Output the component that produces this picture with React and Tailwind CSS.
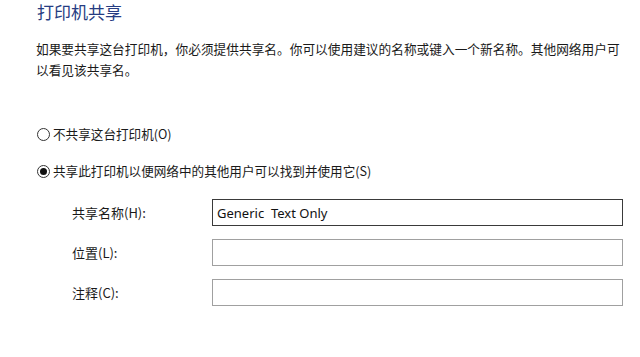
const cjk = { fontFamily: '"Noto Sans CJK SC", "Noto Sans", sans-serif' }

function Radio({ checked, label }) {
  return (
    <label className="flex items-center h-[20px] gap-[3px] text-[12.6px] text-[#1a1a1a]">
      <span className="relative w-[13px] h-[13px] rounded-full border border-[#333] bg-white flex items-center justify-center shrink-0">
        {checked && <span className="w-[7px] h-[7px] rounded-full bg-[#111]" />}
      </span>
      <span className="leading-[20px]">{label}</span>
    </label>
  )
}

function Field({ label, value, focused }) {
  return (
    <div className="flex items-center h-[27px]">
      <div className="w-[140px] pl-[72px] box-content text-[13px] text-[#1a1a1a] leading-[20px]">
        {label}
      </div>
      <input
        readOnly
        defaultValue={value}
        className={`w-[411px] h-[27px] px-[4px] text-[13px] text-[#111] bg-white outline-none border ${
          focused ? 'border-[#3a3a3a]' : 'border-[#a0a0a0]'
        }`}
        style={{ fontFamily: '"Noto Sans", "Open Sans", sans-serif' }}
      />
    </div>
  )
}

export default function App() {
  return (
    <div className="w-[640px] h-[357px] bg-white overflow-hidden" style={cjk}>
      <div className="pl-[37px] h-[24px] text-[17px] leading-[24px] text-[#263c82]">打印机共享</div>

      <p className="mt-[14px] pl-[36px] w-[626px] text-[12.7px] leading-[21px] text-[#1a1a1a]">
        如果要共享这台打印机，你必须提供共享名。你可以使用建议的名称或键入一个新名称。其他网络用户可以看见该共享名。
      </p>

      <div className="mt-[44px] pl-[37px] flex flex-col gap-[17px]">
        <Radio label="不共享这台打印机(O)" />
        <Radio checked label="共享此打印机以便网络中的其他用户可以找到并使用它(S)" />
      </div>

      <div className="mt-[18px] flex flex-col gap-[13px]">
        <Field label="共享名称(H):" value="Generic  Text Only" focused />
        <Field label="位置(L):" value="" />
        <Field label="注释(C):" value="" />
      </div>
    </div>
  )
}
